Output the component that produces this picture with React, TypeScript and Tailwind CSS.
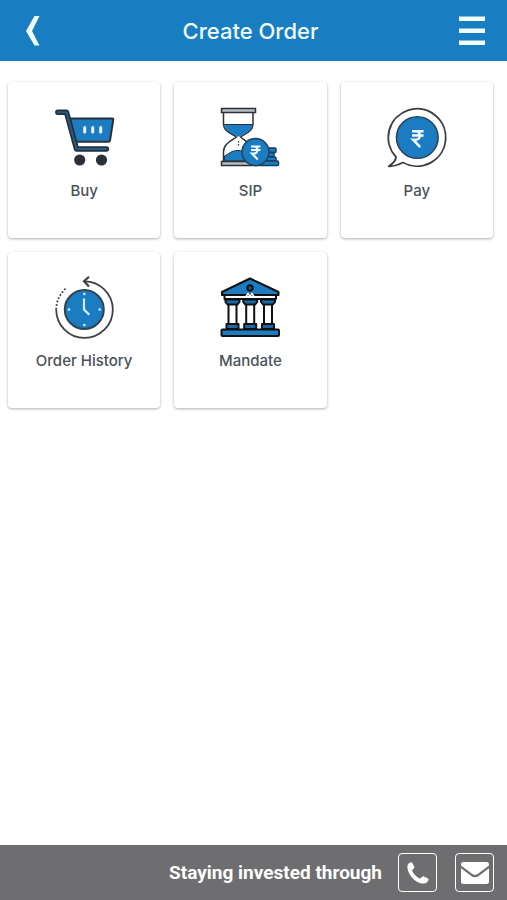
import type { ReactNode } from 'react'

interface OrderTileProps {
  label: string
  href: string
  icon: ReactNode
}

const BLUE = '#1b7cc2'
const DARK = '#2b3138'

const CartIcon = () => (
  <svg viewBox="0 0 64 64" className="size-16" aria-hidden="true">
    <path d="M18 12.5H60.5Q61.5 12.5 61.3 13.5L58 34.5Q57.8 35.7 56.5 35.7H23.5Z" fill={BLUE} stroke={DARK} strokeWidth="2" strokeLinejoin="round" />
    <path d="M5.8 6.3H14.5L24.5 43H54.5" fill="none" stroke="#24313d" strokeWidth="5.4" strokeLinecap="round" strokeLinejoin="round" />
    <path d="M5.8 6.3H14.5L24.5 43H54.5" fill="none" stroke="#275a80" strokeWidth="2" strokeLinecap="round" strokeLinejoin="round" />
    <path d="M32.7 21.5V26M40.7 21.5V26M48.7 21.5V26" stroke="#e8f6ff" strokeWidth="3" strokeLinecap="round" />
    <circle cx="27.7" cy="54" r="5.6" fill={DARK} />
    <circle cx="49.5" cy="54" r="5.6" fill={DARK} />
  </svg>
)

const Rupee = () => (
  <path d="M0 1.2H10.5M0 5H10.5M0 1.2H3.5C8.3 1.2 8.3 8.8 3.5 8.8H1L7.5 15.5" fill="none" stroke="#f2fbff" strokeWidth="2.3" />
)

const HourglassIcon = () => (
  <svg viewBox="0 0 64 64" className="size-16" aria-hidden="true">
    <path d="M5.5 7V18C5.5 25 13 27 18.5 31C13 35 5.5 38 5.5 46V55H35V46C35 38 27 35 22.5 31C28 27 35 25 35 18V7" fill="#fff" stroke={DARK} strokeWidth="1.5" />
    <path d="M6.5 18.5H34.5C33.5 25 27 27 22 30.5H19C14 27 7 25 6.5 18.5Z" fill={BLUE} />
    <path d="M6 18.5H35" stroke={DARK} strokeWidth="1" />
    <path d="M6.5 55V50C11 48 13 44.5 20 44.5C27 44.5 30 48 35 50V55Z" fill={BLUE} stroke={DARK} strokeWidth="1" />
    <path d="M20.5 35V41" stroke={DARK} strokeWidth="1.2" strokeDasharray="1.5 1.5" />
    <rect x="3.5" y="2.5" width="34" height="4" fill="#b9bdc1" stroke={DARK} strokeWidth="1.5" />
    <rect x="3.5" y="55.5" width="34" height="4" fill="#b9bdc1" stroke={DARK} strokeWidth="1.5" />
    <g fill={BLUE} stroke="#173d5c" strokeWidth="1.5">
      <rect x="42" y="42" width="16" height="4.5" rx="1" />
      <rect x="42" y="46.5" width="14" height="4.5" rx="1" />
      <rect x="42" y="51" width="16" height="4" rx="1" />
      <rect x="37" y="55" width="23.5" height="4.5" rx="1" />
    </g>
    <circle cx="37.5" cy="46" r="13.5" fill={BLUE} stroke="#23445e" strokeWidth="1.6" />
    <g transform="translate(33 39.5) scale(.9)">
      <Rupee />
    </g>
  </svg>
)

const PayIcon = () => (
  <svg viewBox="0 0 64 64" className="size-16" aria-hidden="true">
    <path d="M11 51A28.7 28.7 0 1 1 18 56.5C14 58.5 9 60.5 3.8 60.2C8 57.5 11 55 11 51Z" fill="#fff" stroke="#3d4044" strokeWidth="1.9" strokeLinejoin="round" />
    <circle cx="32.3" cy="31.5" r="20.8" fill={BLUE} stroke="#28475f" strokeWidth="1.6" />
    <g transform="translate(27 24) scale(1.1)">
      <Rupee />
    </g>
  </svg>
)

const HistoryIcon = () => (
  <svg viewBox="0 0 64 64" className="size-16" aria-hidden="true">
    <g fill="none" stroke="#3d4044" strokeWidth="1.8">
      <path d="M32 5.3A28.3 28.3 0 1 1 4.2 33.5" />
      <path d="M4.2 33.5A28.3 28.3 0 0 1 15 11.5" strokeDasharray="1.8 1.8" />
      <path d="M37 .8L32 5.3L37 10.5" strokeWidth="2.2" />
    </g>
    <circle cx="32.3" cy="33.5" r="19.5" fill={BLUE} stroke="#31434f" strokeWidth="2" />
    <path d="M32 22.5V33.5L37.3 38.7" fill="none" stroke="#cfeeff" strokeWidth="2.2" />
    <g fill="#cfeeff">
      <circle cx="32.3" cy="18" r="1.3" />
      <circle cx="32.3" cy="49" r="1.3" />
      <circle cx="17" cy="33.5" r="1.3" />
      <circle cx="47.7" cy="33.5" r="1.3" />
    </g>
  </svg>
)

const BankIcon = () => (
  <svg viewBox="0 0 64 64" className="size-16" aria-hidden="true">
    <g stroke="#111" strokeWidth="2" strokeLinejoin="round">
      <rect x="6.5" y="18.5" width="51.5" height="4.5" fill="#fff" />
      <path d="M32 2.5L60.5 16V19H4V16Z" fill={BLUE} />
      <circle cx="32" cy="12" r="2.7" fill="#1a5587" />
      {[14.5, 32.2, 50].map((cx) => (
        <g key={cx}>
          <rect x={cx - 4} y="28" width="8" height="20" fill="#fff" />
          <path d={`M${cx - 7} 23.5H${cx + 7}V26L${cx + 5} 28.5H${cx - 5}L${cx - 7} 26Z`} fill="#1a6aa8" />
          <rect x={cx - 6} y="48" width="12" height="5" fill="#1a6aa8" />
        </g>
      ))}
      <rect x="3.5" y="53.5" width="57.5" height="6.5" rx="1" fill={BLUE} />
    </g>
    <path d="M28 20.5L30 17.5L32 20.5L34 17.5L36 20.5" fill="none" stroke="#fff" strokeWidth="1.5" />
  </svg>
)

const PhoneIcon = () => (
  <svg viewBox="0 0 22 22" className="size-[22px]" aria-hidden="true">
    <path
      d="M.4 4.5C.5 2.6 1.8.9 3.6.3Q4.9 0 5.5 1.3L7.2 4.6Q7.7 5.7 6.8 6.5L5.3 7.9Q4.9 8.4 5.2 9.1C6.6 12 9.4 14.9 12.4 16.4Q13.1 16.7 13.6 16.2L15.1 14.8Q15.9 14 17 14.5L20.6 16.3Q21.8 16.9 21.5 18.1C20.9 20 19.1 21.4 17 21.6C9 22 .2 12.500 .4 4.500Z"
      fill="currentColor"
    />
  </svg>
)

const MailIcon = () => (
  <svg viewBox="0 0 28 22" className="h-[22px] w-7" aria-hidden="true">
    <path d="M2.500 0H25.500Q28 0 28 2.500V3.500L17 11.800Q14 14 11 11.800L0 3.500V2.500Q0 0 2.500 0Z" fill="currentColor" />
    <path d="M0 6.300L10 13.800Q14 16.800 18 13.800L28 6.300V19.500Q28 22 25.500 22H2.500Q0 22 0 19.500Z" fill="currentColor" />
  </svg>
)

const OrderTile = ({ label, href, icon }: OrderTileProps) => (
  <a
    href={href}
    className="flex h-[156px] flex-col items-center gap-2 rounded-sm bg-white pt-6 shadow-[0_1px_3px_rgba(0,0,0,0.32)]"
  >
    {icon}
    <span className="text-[15px] leading-[26px] font-medium text-[#4c5158]">{label}</span>
  </a>
)

const tiles: OrderTileProps[] = [
  { label: 'Buy', href: '#buy', icon: <CartIcon /> },
  { label: 'SIP', href: '#sip', icon: <HourglassIcon /> },
  { label: 'Pay', href: '#pay', icon: <PayIcon /> },
  { label: 'Order History', href: '#history', icon: <HistoryIcon /> },
  { label: 'Mandate', href: '#mandate', icon: <BankIcon /> },
]

const App = () => {
  return (
    <div className="flex min-h-screen flex-col bg-white font-['Inter',sans-serif]">
      {/* Top bar */}
      <header className="flex h-[61px] items-center justify-between bg-[#187dc1] pr-3.5 pl-2 text-[#f0fbff]">
        <button type="button" aria-label="Back" className="flex size-12 items-center justify-center pl-0.5">
          <svg viewBox="0 0 14 30" className="h-[30px] w-3.5" aria-hidden="true">
            <path d="M8.500 0H13.500L6 15L13.500 29.500H8.500L0 15Z" fill="currentColor" />
          </svg>
        </button>
        <h1 className="text-[22px] leading-7 font-medium">Create Order</h1>
        <button type="button" aria-label="Menu" className="flex size-12 items-center justify-end pr-2">
          <svg viewBox="0 0 26 30" className="h-[30px] w-[26px]" aria-hidden="true">
            <path d="M0 0.500H26V5H0ZM0 12.500H26V17H0ZM0 24.500H26V29H0Z" fill="currentColor" />
          </svg>
        </button>
      </header>

      {/* Order options */}
      <main className="grid grow grid-cols-3 content-start gap-3.5 pt-[21px] pr-3.5 pl-2">
        {tiles.map((tile) => (
          <OrderTile key={tile.label} {...tile} />
        ))}
      </main>

      {/* Contact bar */}
      <footer className="flex h-[55px] items-center justify-end bg-[#6e6e70] pr-[13px] text-white">
        <p className="mr-4 font-['Roboto',sans-serif] text-[19px] leading-6 font-bold">Staying invested through</p>
        <a
          href="#call"
          aria-label="Call"
          className="mr-[18px] flex size-[39px] items-center justify-center rounded-sm border border-white"
        >
          <PhoneIcon />
        </a>
        <a
          href="#email"
          aria-label="Email"
          className="flex size-[39px] items-center justify-center rounded-sm border border-white"
        >
          <MailIcon />
        </a>
      </footer>
    </div>
  )
}

export default App
